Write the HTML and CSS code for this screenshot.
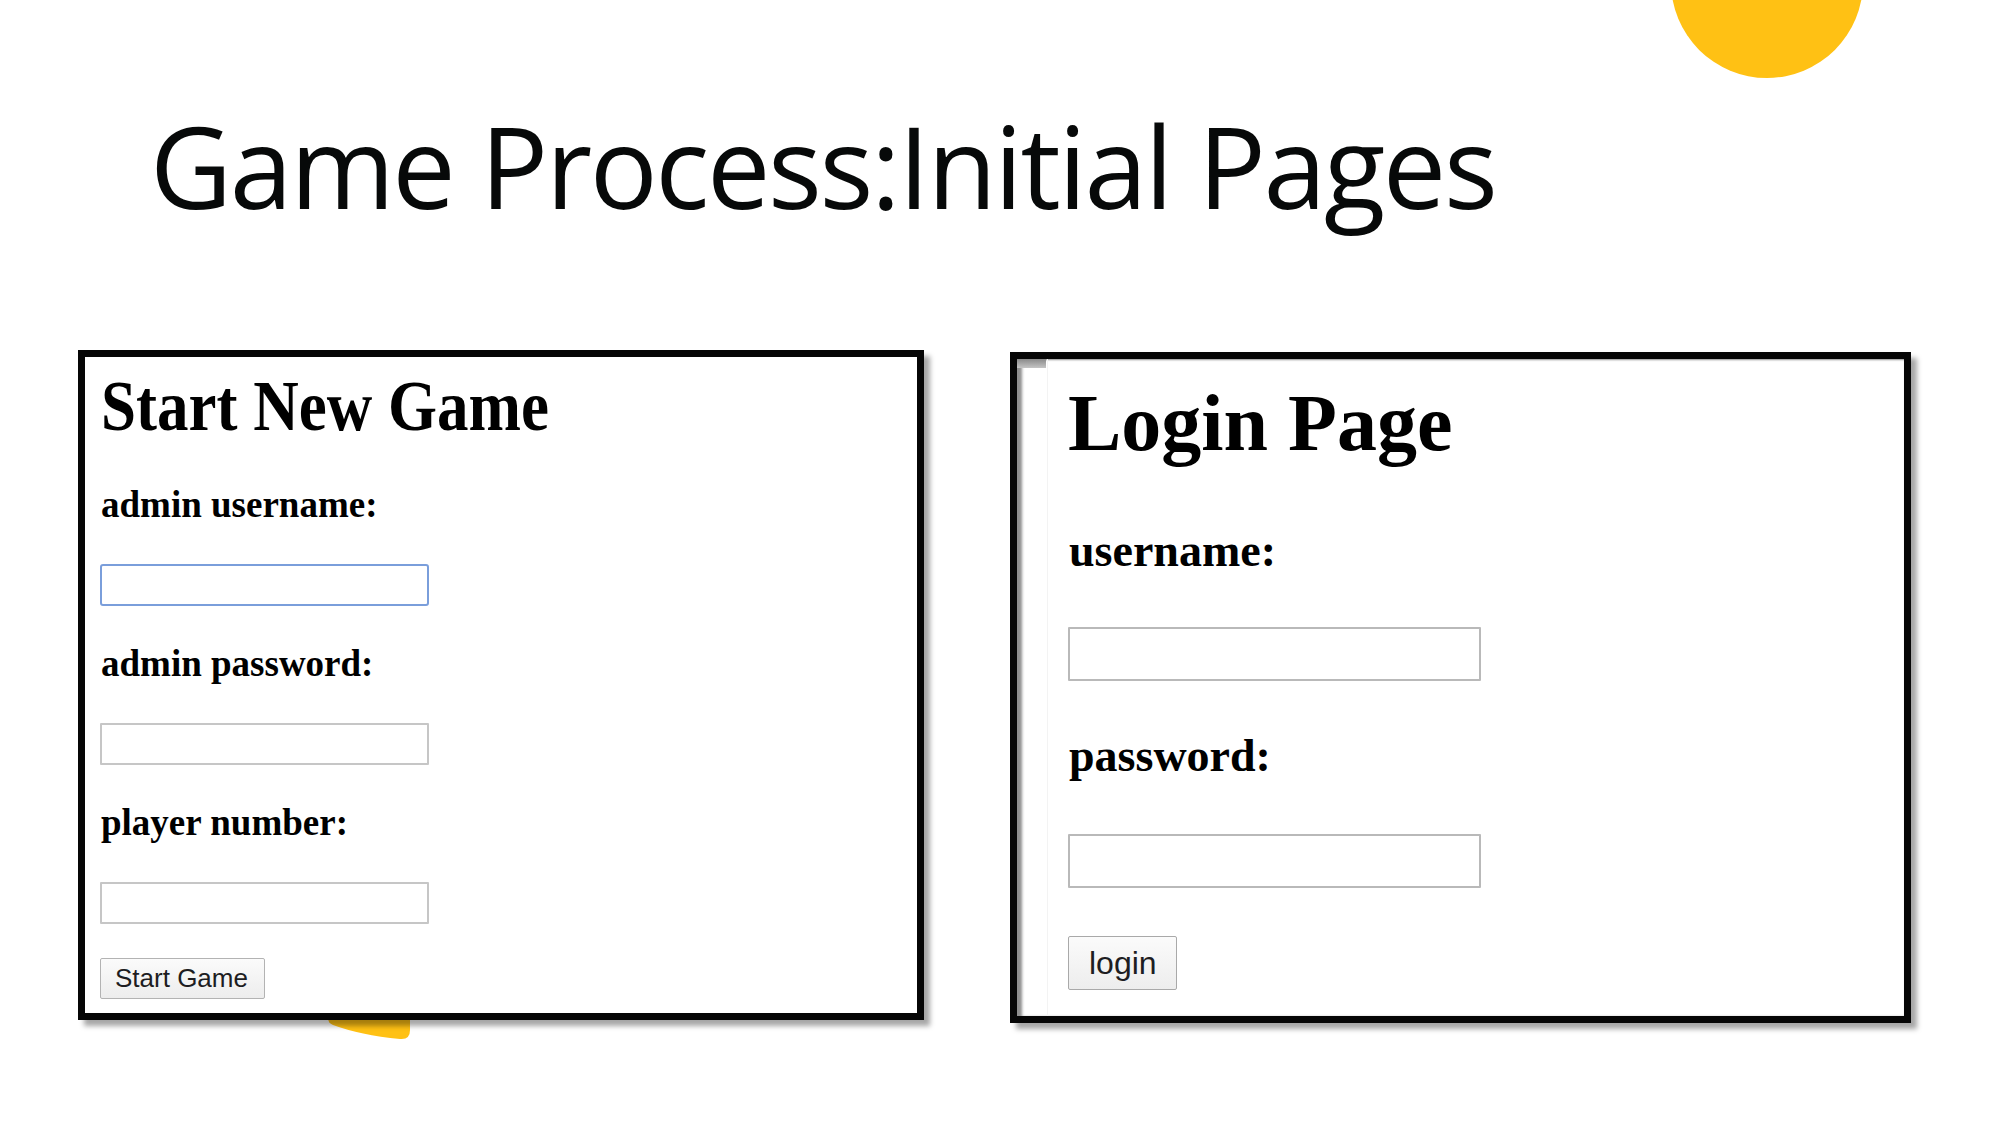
FILE: index.html
```html
<!DOCTYPE html>
<html lang="en">
<head>
<meta charset="utf-8">
<title>Game Process:Initial Pages</title>
<link rel="stylesheet" href="styles.css">
</head>
<body>
<div class="slide">
  <div class="sun"></div>
  <header class="header">
    <h1 class="title">Game Process:Initial Pages</h1>
  </header>
  <div class="panels">
    <div class="panel-wrap">
      <svg class="blob" viewBox="0 0 82 28" width="82" height="28" aria-hidden="true">
        <path d="M0 0 L82 0 L82 18 Q82 28 72 27 Q32 23 5 13 Q0 11 0 6 Z" fill="#ffc114"/>
      </svg>
      <section class="panel panel-start">
        <h2 class="start-heading">Start New Game</h2>
        <div class="start-label">admin username:</div>
        <input class="start-input is-focused" type="text">
        <div class="start-label">admin password:</div>
        <input class="start-input" type="password">
        <div class="start-label">player number:</div>
        <input class="start-input" type="text">
        <button class="start-button" type="button">Start Game</button>
      </section>
    </div>
    <section class="panel panel-login">
      <h2 class="login-heading">Login Page</h2>
      <div class="login-label login-label-user">username:</div>
      <input class="login-input login-input-user" type="text">
      <div class="login-label login-label-pass">password:</div>
      <input class="login-input login-input-pass" type="password">
      <button class="login-button" type="button">login</button>
    </section>
  </div>
</div>
</body>
</html>
```
FILE: styles.css
```css
* { box-sizing: border-box; }
html, body { margin: 0; padding: 0; background: #fff; }

.slide {
  position: relative;
  width: 2000px;
  height: 1125px;
  overflow: hidden;
  background: #fff;
}

.sun {
  position: absolute;
  left: 1671px;
  top: -114px;
  width: 192px;
  height: 192px;
  border-radius: 50%;
  background: #ffc114;
}

.header {
  height: 350px;
  padding: 109px 0 0 150px;
}

.title {
  margin: 0;
  font-family: "Open Sans", sans-serif;
  font-weight: 400;
  font-size: 113px;
  line-height: 1;
  letter-spacing: -2.4px;
  color: #070909;
  white-space: nowrap;
}

.panels {
  display: flex;
  align-items: flex-start;
  padding-left: 78px;
  gap: 86px;
}

.panel-wrap {
  position: relative;
  width: 846px;
  height: 670px;
}

.blob {
  position: absolute;
  left: 250px;
  top: 662px;
  z-index: 0;
}

.panel {
  position: relative;
  z-index: 1;
  background: #fff;
  border: 7px solid #060606;
  font-family: "Liberation Serif", "Times New Roman", serif;
  color: #000;
  display: flex;
  flex-direction: column;
  align-items: flex-start;
}

/* ---------- Start New Game ---------- */
.panel-start {
  width: 846px;
  height: 670px;
  padding: 13px 0 0 15px;
  box-shadow: 6px 6px 5px rgba(0, 0, 0, 0.35);
}

.start-heading {
  margin: 0 0 5px 1px;
  font-size: 72px;
  line-height: 72px;
  height: 72px;
  font-weight: 700;
  white-space: nowrap;
  transform: scaleX(0.875);
  transform-origin: left center;
}

.start-label {
  margin: 39px 0 0 1px;
  font-size: 37px;
  line-height: 37px;
  font-weight: 700;
  white-space: nowrap;
}

.start-input {
  display: block;
  margin: 41px 0 0 0;
  width: 329px;
  height: 42px;
  padding: 0;
  border: 2px solid #c6c6c6;
  border-radius: 1px;
  background: #fff;
  outline: none;
}

.start-input.is-focused {
  border-color: #7a9edb;
  border-radius: 3px;
}

.start-button {
  margin-top: 34px;
  width: 165px;
  height: 41px;
  padding: 0 0 0 14px;
  text-align: left;
  font-family: "Liberation Sans", Arial, sans-serif;
  font-size: 26px;
  color: #1d1d22;
  background: linear-gradient(#fbfbfb, #ededed);
  border: 1px solid #b3b3b3;
  border-radius: 2px;
}

/* ---------- Login Page ---------- */
.panel-login {
  width: 901px;
  height: 671px;
  margin-top: 2px;
  padding: 24px 0 0 51px;
  box-shadow: 6px 6px 5px rgba(0, 0, 0, 0.35),
              inset 6px 0 3px -1px #8e8e8e,
              inset 0 2px 2px -1px #9a9a9a;
}

.panel-login::before {
  content: "";
  position: absolute;
  left: 30px;
  top: 0;
  bottom: 0;
  width: 1px;
  background: #f3f3f3;
}

.panel-login::after {
  content: "";
  position: absolute;
  left: 0;
  top: 0;
  width: 29px;
  height: 9px;
  background: linear-gradient(#8a8a8a, #c4c4c4);
}

.login-heading {
  margin: 0;
  font-size: 80px;
  line-height: 80px;
  height: 80px;
  font-weight: 700;
  white-space: nowrap;
}

.login-label {
  font-size: 46px;
  line-height: 46px;
  font-weight: 700;
  white-space: nowrap;
  margin-left: 1px;
}

.login-label-user { margin-top: 65px; }
.login-label-pass { margin-top: 52px; }

.login-input {
  display: block;
  width: 413px;
  height: 54px;
  padding: 0;
  border: 2px solid #b9b9b9;
  border-radius: 1px;
  background: #fff;
  outline: none;
}

.login-input-user { margin-top: 53px; }
.login-input-pass { margin-top: 55px; }

.login-button {
  margin-top: 48px;
  width: 109px;
  height: 54px;
  padding: 0 0 0 20px;
  text-align: left;
  font-family: "Liberation Sans", Arial, sans-serif;
  font-size: 32px;
  color: #1d1d22;
  background: linear-gradient(#fbfbfb, #ededed);
  border: 1px solid #a9a9a9;
  border-radius: 2px;
}
```
